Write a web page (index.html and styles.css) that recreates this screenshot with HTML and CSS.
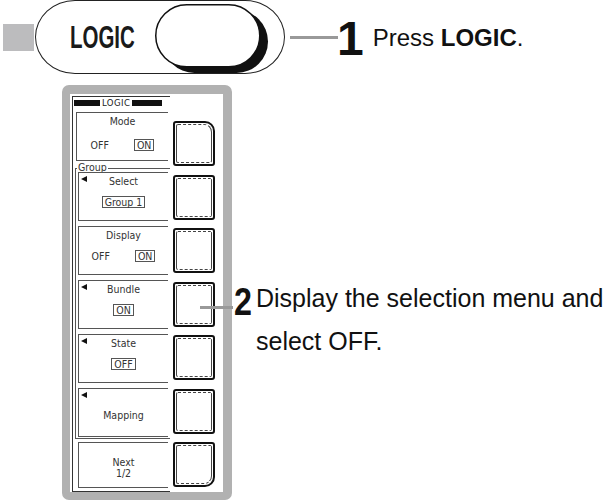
FILE: index.html
```html
<!DOCTYPE html>
<html lang="en">
<head>
<meta charset="utf-8">
<title>LOGIC</title>
<link rel="stylesheet" href="styles.css">
</head>
<body>
<div class="page">
  <div class="row1">
    <div class="sq"></div>
    <div class="pill">
      <span class="pill-label"><span>LOGIC</span></span>
      <svg class="btn" width="114" height="70" viewBox="0 0 114 70">
        <rect x="8" y="6" width="105" height="63" rx="31.5" fill="#111"/>
        <rect x="0.75" y="0.75" width="104" height="62" rx="31" fill="#fff" stroke="#111" stroke-width="1.5"/>
      </svg>
    </div>
    <div class="lead1"></div>
    <span class="num1">1</span>
    <span class="step1">Press <b>LOGIC</b>.</span>
  </div>
  <div class="row2">
    <div class="panel">
      <div class="screen">
        <div class="title"><i class="bar"></i><span>LOGIC</span><i class="bar bar-r"></i></div>
        <div class="box mode">
          <span class="lbl">Mode</span>
          <div class="val opt"><span>OFF</span><span class="boxed">ON</span></div>
        </div>
        <div class="group">
          <span class="group-label">Group</span>
          <div class="box"><span class="tri"></span>
            <span class="lbl">Select</span>
            <div class="val"><span class="boxed">Group 1</span></div>
          </div>
          <div class="box">
            <span class="lbl">Display</span>
            <div class="val opt"><span>OFF</span><span class="boxed">ON</span></div>
          </div>
          <div class="box"><span class="tri"></span>
            <span class="lbl">Bundle</span>
            <div class="val"><span class="boxed">ON</span></div>
          </div>
          <div class="box"><span class="tri"></span>
            <span class="lbl">State</span>
            <div class="val"><span class="boxed">OFF</span></div>
          </div>
          <div class="box mapping"><span class="tri"></span>
            <span class="lbl">Mapping</span>
          </div>
        </div>
        <div class="box next">
          <span class="lbl">Next</span>
          <span class="lbl">1/2</span>
        </div>
      </div>
      <div class="keys">
        <div class="key first"><i></i></div>
        <div class="key"><i></i></div>
        <div class="key"><i></i></div>
        <div class="key"><i></i></div>
        <div class="key"><i></i></div>
        <div class="key"><i></i></div>
        <div class="key last"><i></i></div>
      </div>
    </div>
    <div class="step2">
      <span class="num2"><span>2</span></span>
      <span class="text2">Display the selection menu and<br>select OFF.</span>
    </div>
  </div>
</div>
</body>
</html>
```

FILE: styles.css
```css
* { box-sizing: border-box; }
body {
  margin: 0;
  background: #fff;
  font-family: "Liberation Sans", Arial, sans-serif;
  color: #111;
}
.page { width: 609px; height: 501px; overflow: hidden; }

/* top row */
.row1 { display: flex; align-items: center; height: 74px; }
.sq { width: 31px; height: 27px; background: #bcbcbe; margin-left: 3px; flex: none; }
.pill {
  display: flex; align-items: center; flex: none;
  width: 250px; height: 74px; margin-left: 1px;
  border: 1.5px solid #222; border-radius: 40px / 37px;
  padding-left: 33.5px;
}
.pill-label { width: 63px; white-space: nowrap; font: bold 31px/1 "Liberation Sans", Arial, sans-serif; color: #1a1a1a; flex: none; }
.pill-label span { display: inline-block; transform: scaleX(0.66); transform-origin: 0 50%; }
.btn { display: block; margin-left: 22px; align-self: flex-start; margin-top: 2.5px; flex: none; }
.lead1 { width: 48px; height: 3px; background: #999; margin-left: 5px; flex: none; }
.num1 { font: bold 48px/1 "Liberation Sans", Arial, sans-serif; margin: 4px 0 0 -1px; }
.step1 { font-size: 24px; margin: 2px 0 0 9px; white-space: nowrap; }

/* lower row */
.row2 { display: flex; align-items: flex-start; margin-top: 11px; }
.panel {
  display: flex; align-items: flex-start; flex: none;
  width: 170px; height: 415px; margin-left: 62px;
  border: solid #b1b1b1; border-width: 9px 9px 8px 8px; border-radius: 7px;
}
.screen {
  width: 98px; height: 396px; margin: 2px 0 0 2px; flex: none;
  border: 1px solid #333; border-right: none;
  display: flex; flex-direction: column; align-items: flex-start;
  font: 10.5px/12px "DejaVu Sans Condensed", "DejaVu Sans", sans-serif; color: #333;
}
.title { display: flex; align-items: center; height: 6px; margin: 3px 0 0 1px; font-size: 9.5px; line-height: 6px; color: #222; }
.title span { padding: 0 2px; letter-spacing: 0.4px; }
.bar { display: block; width: 26px; height: 6px; background: #111; }
.bar-r { width: 30px; }

.box {
  position: relative; flex: none;
  width: 90px; height: 49px;
  border: 1px solid #555; border-right: none;
  display: flex; flex-direction: column; align-items: center;
  padding-top: 2px;
}
.lbl { line-height: 12px; }
.val { margin-top: 9px; }
.opt { display: flex; align-items: center; gap: 25px; }
.boxed { display: block; border: 1px solid #555; padding: 0 2px; line-height: 10px; }
.tri {
  position: absolute; left: 2px; top: 3px;
  width: 0; height: 0;
  border-top: 3px solid transparent; border-bottom: 3px solid transparent;
  border-right: 6px solid #111;
}
.mode { width: 92px; margin: 6px 0 0 3px; }
.mode .val { margin-top: 12px; }

.group {
  width: 95px; margin: 7px 0 0 2px;
  border: 1px solid #555; border-right: none;
  padding: 0 0 1px 2px;
}
.group-label {
  display: block; width: fit-content;
  margin: -6px 0 0 -1px; padding: 0 1px;
  background: #fff; line-height: 8px;
}
.group-label + .box { margin-top: 1px; }
.group .box + .box { margin-top: 5px; }
.mapping { padding-top: 20px; }
.next { height: 46px; margin: 3px 0 0 5px; padding-top: 13.5px; }
.next .lbl { line-height: 11px; }

.keys { display: flex; flex-direction: column; gap: 8.5px; margin: 27px 0 0 3px; flex: none; }
.key {
  width: 42px; height: 45px;
  border: 2px solid #111; border-radius: 3px; padding: 1px;
}
.key i {
  display: block; height: 100%;
  border: 1px solid #444; border-top-style: dashed; border-bottom-style: dashed;
  border-radius: 2px;
}
.key.first { border-top-right-radius: 10px; }
.key.first i { border-top-right-radius: 8px; }
.key.last { border-bottom-right-radius: 10px; }
.key.last i { border-bottom-right-radius: 8px; }

/* step 2 */
.step2 { position: relative; display: flex; align-items: flex-start; margin: 192px 0 0 2px; }
.step2::before {
  content: ""; position: absolute; left: -34px; top: 29px;
  width: 33px; height: 3px; background: #999;
}
.num2 { font: bold 38px/38px "Liberation Sans", Arial, sans-serif; margin-top: 6px; width: 21px; }
.num2 span { display: inline-block; transform: scaleX(0.85); transform-origin: 0 50%; }
.text2 { font: 25px/43px "Liberation Sans", Arial, sans-serif; margin-left: 1px; white-space: nowrap; }
```
